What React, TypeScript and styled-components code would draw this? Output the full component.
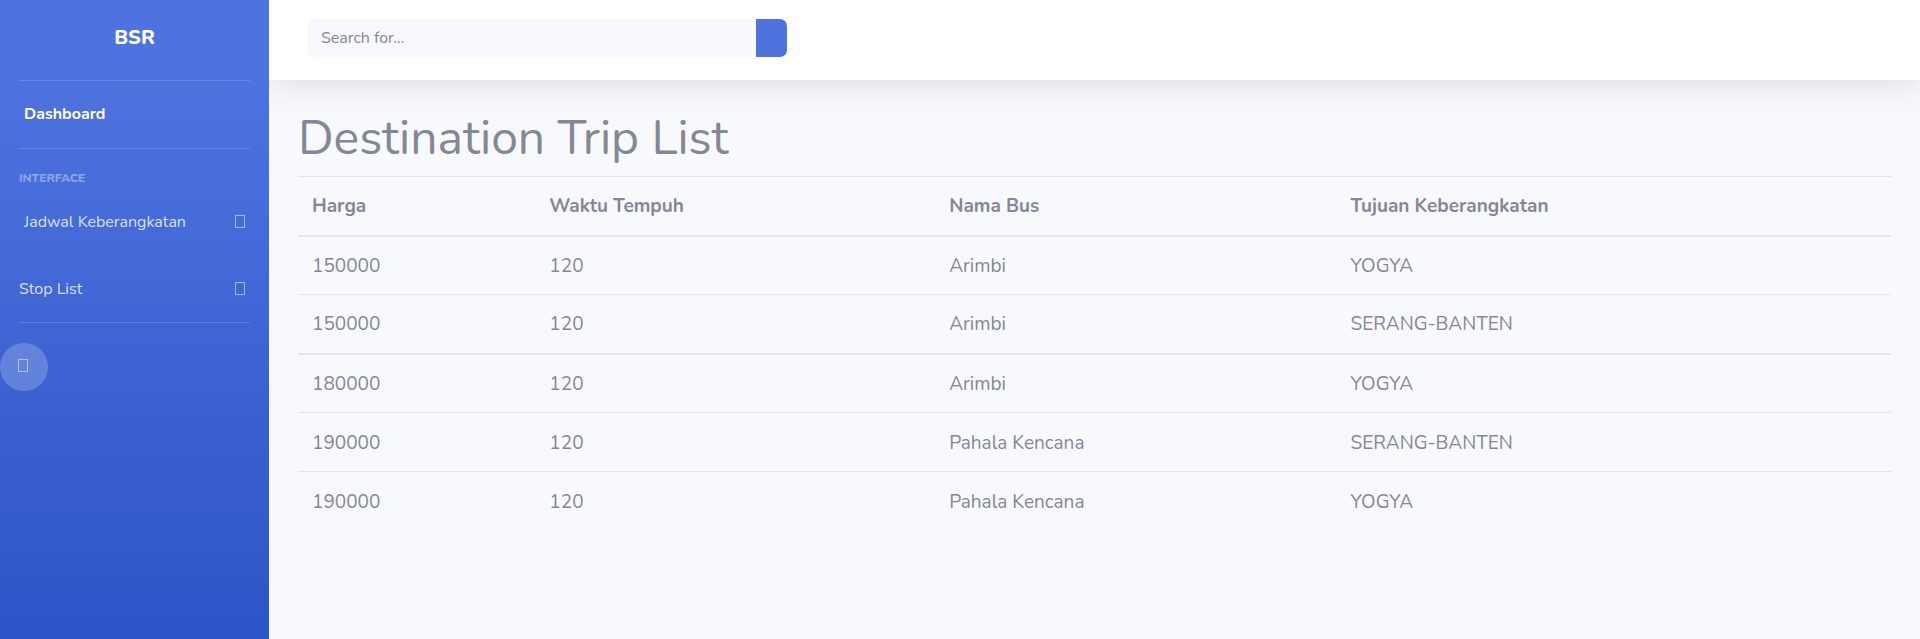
import React from 'react';
import styled, { createGlobalStyle } from 'styled-components';

const GlobalStyle = createGlobalStyle`
  *, *::before, *::after { box-sizing: border-box; }
  body {
    margin: 0;
    background: #f8f9fc;
    color: #858796;
    font-family: Nunito, Lato, "Open Sans", sans-serif;
    font-size: 19px;
    line-height: 29px;
  }
`;

const Wrapper = styled.div`
  display: flex;
  min-height: 100vh;
`;

const Sidebar = styled.nav`
  position: relative;
  z-index: 1;
  flex: 0 0 269px;
  display: flex;
  flex-direction: column;
  background: linear-gradient(180deg, #4e73df 13%, #224abe 129%);
`;

const Brand = styled.a`
  display: flex;
  align-items: center;
  justify-content: center;
  height: 80px;
  padding-bottom: 5px;
  color: #fff;
  font-size: 20px;
  font-weight: 800;
  text-decoration: none;
`;

const Divider = styled.hr`
  width: calc(100% - 38px);
  height: 1px;
  margin: 0 19px;
  border: 0;
  background: rgba(255, 255, 255, 0.15);
`;

const NavLink = styled.a<{ $active?: boolean; $inset?: boolean }>`
  display: flex;
  align-items: center;
  justify-content: space-between;
  height: 67px;
  padding: 0 24px 0 ${(p) => (p.$inset ? 24 : 19)}px;
  color: ${(p) => (p.$active ? '#fff' : 'rgba(255, 255, 255, 0.8)')};
  font-size: 16px;
  font-weight: ${(p) => (p.$active ? 700 : 400)};
  text-decoration: none;
`;

const Group = styled.div`
  margin-bottom: -1px;
`;

const SectionHeading = styled.div`
  height: 40px;
  padding: 15px 19px 0;
  color: rgba(255, 255, 255, 0.4);
  font-size: 12px;
  font-weight: 800;
  line-height: 29px;
  text-transform: uppercase;
`;

const Glyph = styled.span`
  width: 10px;
  height: 13px;
  margin-bottom: 3px;
  border: 1px solid rgba(255, 255, 255, 0.5);
`;

const Toggle = styled.button`
  display: flex;
  align-items: center;
  justify-content: center;
  width: 48px;
  height: 48px;
  margin-top: 20px;
  padding: 0 2px 0 0;
  border: 0;
  border-radius: 50%;
  background: rgba(255, 255, 255, 0.2);
  cursor: pointer;
`;

const Content = styled.div`
  flex: 1;
  min-width: 0;
`;

const Topbar = styled.header`
  height: 80px;
  padding: 19px 38px;
  background: #fff;
  box-shadow: 0 3px 34px rgba(58, 59, 69, 0.15);
`;

const SearchForm = styled.form`
  display: flex;
  height: 38px;
  width: 480px;
  max-width: 100%;
`;

const SearchInput = styled.input`
  flex: 1;
  min-width: 0;
  padding: 0 14px;
  border: 0;
  border-radius: 7px 0 0 7px;
  background: #f8f9fc;
  color: #6e707e;
  font-family: inherit;
  font-size: 16px;
  &::placeholder { color: #858796; opacity: 1; }
`;

const SearchButton = styled.button`
  width: 31px;
  padding: 0;
  border: 0;
  border-radius: 0 7px 7px 0;
  background: #4e73df;
  cursor: pointer;
`;

const Main = styled.main`
  padding: 29px;
`;

const Title = styled.h1`
  margin: 0 0 9px;
  font-size: 48px;
  font-weight: 400;
  line-height: 58px;
`;

const Table = styled.table`
  width: 100%;
  border-collapse: collapse;
  table-layout: fixed;
  text-align: left;

  th, td {
    height: 59px;
    padding: 2px 14px 0;
    border-top: 1px solid #e3e6f0;
  }
  th { font-weight: 700; border-bottom: 2px solid #e3e6f0; }
  tbody + tbody { border-top: 2px solid #e3e6f0; }
`;

const Col = styled.col<{ $share: number }>`
  width: ${(p) => p.$share}%;
`;

const columns = [
  { label: 'Harga', share: 14.9 },
  { label: 'Waktu Tempuh', share: 25.1 },
  { label: 'Nama Bus', share: 25.2 },
  { label: 'Tujuan Keberangkatan', share: 34.8 },
];

const groups = [
  [
    ['150000', '120', 'Arimbi', 'YOGYA'],
    ['150000', '120', 'Arimbi', 'SERANG-BANTEN'],
  ],
  [
    ['180000', '120', 'Arimbi', 'YOGYA'],
    ['190000', '120', 'Pahala Kencana', 'SERANG-BANTEN'],
    ['190000', '120', 'Pahala Kencana', 'YOGYA'],
  ],
];

export default function App() {
  return (
    <>
      <GlobalStyle />
      <Wrapper>
        <Sidebar>
          <Brand href="#">BSR</Brand>
          <Divider />
          <NavLink href="#" $active $inset>Dashboard</NavLink>
          <Divider />
          <SectionHeading>Interface</SectionHeading>
          <Group>
            <NavLink href="#" $inset>Jadwal Keberangkatan<Glyph /></NavLink>
            <NavLink href="#">Stop List<Glyph /></NavLink>
          </Group>
          <Divider />
          <Toggle type="button" aria-label="Toggle sidebar"><Glyph /></Toggle>
        </Sidebar>
        <Content>
          <Topbar>
            <SearchForm onSubmit={(e: React.FormEvent) => e.preventDefault()}>
              <SearchInput type="text" placeholder="Search for..." aria-label="Search" />
              <SearchButton type="submit" aria-label="Submit search" />
            </SearchForm>
          </Topbar>
          <Main>
            <Title>Destination Trip List</Title>
            <Table>
              <colgroup>
                {columns.map((c) => <Col key={c.label} $share={c.share} />)}
              </colgroup>
              <thead>
                <tr>{columns.map((c) => <th key={c.label} scope="col">{c.label}</th>)}</tr>
              </thead>
              {groups.map((rows, g) => (
                <tbody key={g}>
                  {rows.map((row, r) => (
                    <tr key={r}>{row.map((cell, i) => <td key={i}>{cell}</td>)}</tr>
                  ))}
                </tbody>
              ))}
            </Table>
          </Main>
        </Content>
      </Wrapper>
    </>
  );
}
